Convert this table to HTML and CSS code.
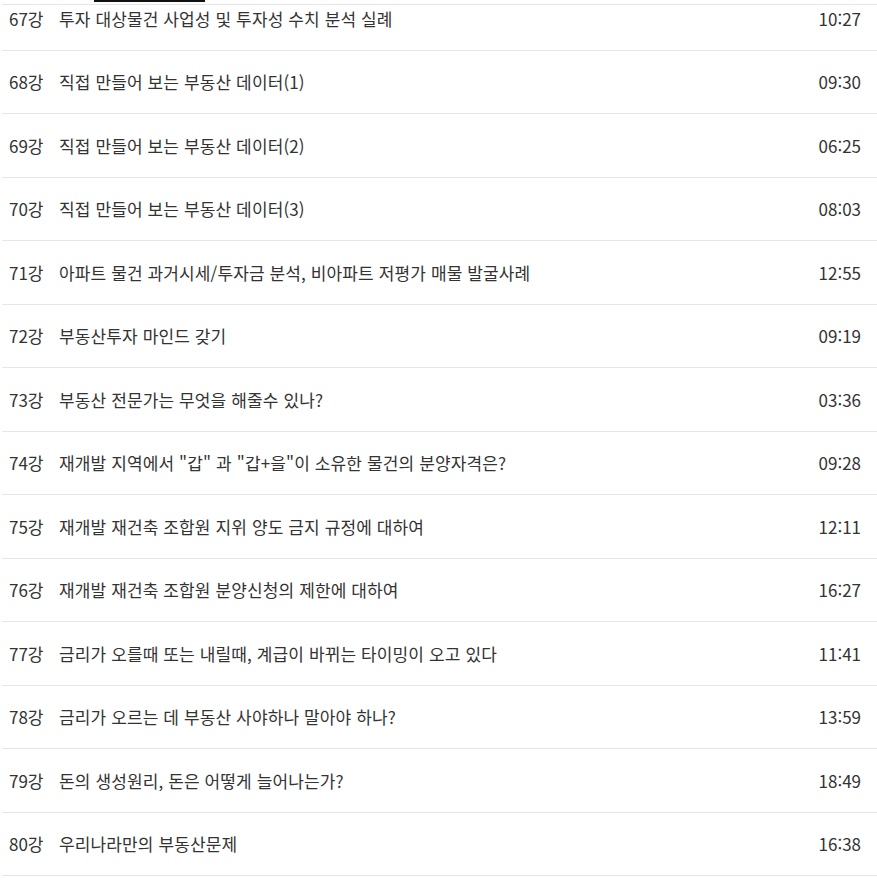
FILE: index.html
```html
<!DOCTYPE html>
<html lang="ko">
<head>
<meta charset="utf-8">
<link rel="stylesheet" href="styles.css">
</head>
<body>
<div class="tabbar"><span class="tab-active"></span></div>
<ul class="lectures">
  <li class="row"><span class="num">67강</span><span class="title">투자 대상물건 사업성 및 투자성 수치 분석 실례</span><span class="time">10:27</span></li>
  <li class="row"><span class="num">68강</span><span class="title">직접 만들어 보는 부동산 데이터(1)</span><span class="time">09:30</span></li>
  <li class="row"><span class="num">69강</span><span class="title">직접 만들어 보는 부동산 데이터(2)</span><span class="time">06:25</span></li>
  <li class="row"><span class="num">70강</span><span class="title">직접 만들어 보는 부동산 데이터(3)</span><span class="time">08:03</span></li>
  <li class="row"><span class="num">71강</span><span class="title">아파트 물건 과거시세/투자금 분석, 비아파트 저평가 매물 발굴사례</span><span class="time">12:55</span></li>
  <li class="row"><span class="num">72강</span><span class="title">부동산투자 마인드 갖기</span><span class="time">09:19</span></li>
  <li class="row"><span class="num">73강</span><span class="title">부동산 전문가는 무엇을 해줄수 있나?</span><span class="time">03:36</span></li>
  <li class="row"><span class="num">74강</span><span class="title">재개발 지역에서 "갑" 과 "갑+을"이 소유한 물건의 분양자격은?</span><span class="time">09:28</span></li>
  <li class="row"><span class="num">75강</span><span class="title">재개발 재건축 조합원 지위 양도 금지 규정에 대하여</span><span class="time">12:11</span></li>
  <li class="row"><span class="num">76강</span><span class="title">재개발 재건축 조합원 분양신청의 제한에 대하여</span><span class="time">16:27</span></li>
  <li class="row"><span class="num">77강</span><span class="title">금리가 오를때 또는 내릴때, 계급이 바뀌는 타이밍이 오고 있다</span><span class="time">11:41</span></li>
  <li class="row"><span class="num">78강</span><span class="title">금리가 오르는 데 부동산 사야하나 말아야 하나?</span><span class="time">13:59</span></li>
  <li class="row"><span class="num">79강</span><span class="title">돈의 생성원리, 돈은 어떻게 늘어나는가?</span><span class="time">18:49</span></li>
  <li class="row"><span class="num">80강</span><span class="title">우리나라만의 부동산문제</span><span class="time">16:38</span></li>
</ul>
</body>
</html>
```
FILE: styles.css
```css
html, body {
  margin: 0;
  padding: 0;
  background: #fff;
}
body {
  font-family: "Noto Sans CJK KR", "Noto Sans", sans-serif;
  color: #333;
  font-size: 17px;
  overflow: hidden;
}
.tabbar {
  position: absolute;
  top: 0;
  left: 2px;
  right: 0;
  height: 4px;
  border-bottom: 1px solid #e6e6e6;
  background: #fff;
  z-index: 2;
}
.tab-active {
  position: absolute;
  left: 92px;
  top: 0;
  width: 111px;
  height: 2px;
  background: #111;
}
.lectures {
  list-style: none;
  margin: -13px 0 0 2px;
  padding: 0;
}
.row {
  display: flex;
  align-items: center;
  height: 62.5px;
  border-bottom: 1px solid #e6e6e6;
  padding: 0 16px 0 7px;
}
.num {
  width: 50px;
  flex: none;
}
.title {
  flex: 1;
  letter-spacing: 0.12px;
}
.time {
  flex: none;
}
```
